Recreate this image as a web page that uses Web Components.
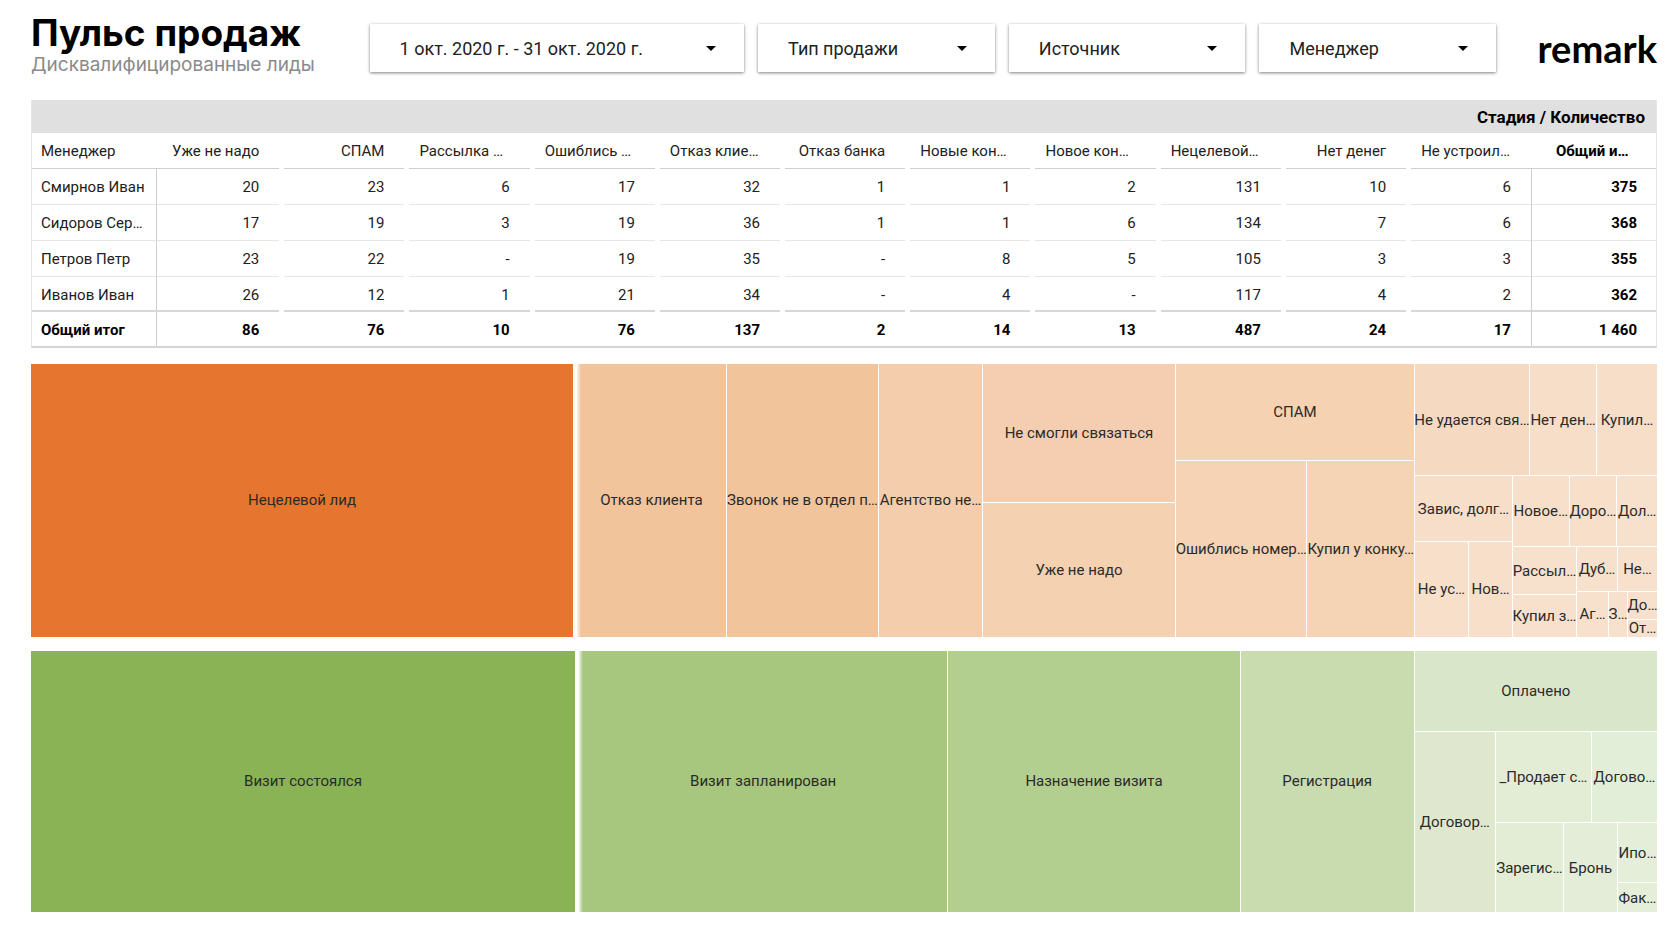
<!DOCTYPE html>
<html lang="ru">
<head>
<meta charset="utf-8">
<meta name="viewport" content="width=device-width, initial-scale=1">
<title>Пульс продаж</title>
<style>
  body { margin: 0; background: #fff; color: #212121; font-family: Roboto, "Noto Sans", sans-serif; }
</style>
</head>
<body>
<sales-dashboard></sales-dashboard>

<script>
class BaseElement extends HTMLElement {
  render(html) {
    const template = document.createElement('template');
    template.innerHTML = html;
    this.attachShadow({ mode: 'open' }).append(template.content.cloneNode(true));
  }
}

/* Page title with a caption below it */
customElements.define('report-title', class extends BaseElement {
  connectedCallback() {
    this.render(`
      <style>
        :host { display: block; font-family: Inter, "Noto Sans", sans-serif; white-space: nowrap; }
        h1 { margin: 0; font-size: 37px; line-height: 40px; font-weight: 700; color: #000; }
        p { margin: 0; font-size: 19px; line-height: 24px; color: #8a8a8a; }
      </style>
      <h1><slot></slot></h1>
      <p><slot name="caption"></slot></p>`);
  }
});

/* Date range button */
customElements.define('date-filter', class extends BaseElement {
  connectedCallback() {
    this.render(`
      <style>
        :host { display: block; }
        button { display: flex; align-items: center; justify-content: space-between; box-sizing: border-box;
          width: 100%; height: 48px; padding: 0 28px 0 30px; border: 0; background: #fff; color: #212121;
          font: 18px Roboto, "Noto Sans", sans-serif; box-shadow: 0 1px 3px rgba(0,0,0,.5); }
        svg { width: 10px; height: 5px; fill: #000; }
      </style>
      <button type="button" aria-haspopup="dialog"><slot></slot><svg viewBox="0 0 10 5" aria-hidden="true"><path d="M0 0h10L5 5z"/></svg></button>`);
  }
});

/* Drop-down filter */
customElements.define('select-filter', class extends BaseElement {
  connectedCallback() {
    const label = this.getAttribute('label');
    this.render(`
      <style>
        :host { display: block; }
        .box { display: grid; align-items: center; background: #fff; box-shadow: 0 1px 3px rgba(0,0,0,.5); }
        select, svg { grid-area: 1 / 1; }
        select { appearance: none; width: 100%; height: 48px; padding: 0 48px 0 30px; border: 0; border-radius: 0;
          background: transparent; color: #212121; font: 18px Roboto, "Noto Sans", sans-serif; }
        svg { justify-self: end; margin-right: 28px; width: 10px; height: 5px; fill: #000; pointer-events: none; }
      </style>
      <div class="box">
        <select aria-label="${label}"><option>${label}</option></select>
        <svg viewBox="0 0 10 5" aria-hidden="true"><path d="M0 0h10L5 5z"/></svg>
      </div>`);
  }
});

customElements.define('brand-logo', class extends BaseElement {
  connectedCallback() {
    this.render(`
      <style>
        :host { display: block; color: #000; font: 700 38px/48px Lato, "Noto Sans", sans-serif; }
      </style>
      <slot></slot>`);
  }
});

/* Pivot table: managers by stage */
const STAGES = ['Уже не надо', 'СПАМ', 'Рассылка …', 'Ошиблись …', 'Отказ клие…', 'Отказ банка', 'Новые кон…',
  'Новое кон…', 'Нецелевой…', 'Нет денег', 'Не устроил…', 'Общий и…'];
const MANAGERS = [
  ['Смирнов Иван', '20', '23', '6', '17', '32', '1', '1', '2', '131', '10', '6', '375'],
  ['Сидоров Сер…', '17', '19', '3', '19', '36', '1', '1', '6', '134', '7', '6', '368'],
  ['Петров Петр', '23', '22', '-', '19', '35', '-', '8', '5', '105', '3', '3', '355'],
  ['Иванов Иван', '26', '12', '1', '21', '34', '-', '4', '-', '117', '4', '2', '362'],
];
const TOTALS = ['Общий итог', '86', '76', '10', '76', '137', '2', '14', '13', '487', '24', '17', '1 460'];

customElements.define('pivot-table', class extends BaseElement {
  connectedCallback() {
    const row = cells => `<tr><th scope="row">${cells[0]}</th>${cells.slice(1).map(c => `<td><span>${c}</span></td>`).join('')}</tr>`;
    this.render(`
      <style>
        :host { display: block; }
        table { width: 100%; table-layout: fixed; border-collapse: separate; border-spacing: 0; box-sizing: border-box;
          border: 1px solid #e6e6e6; border-top: 0; border-bottom: 2px solid #d4d4d4;
          font-size: 15px; line-height: 20px; }
        .name, .total { width: 7.7%; }
        .last { width: 7.5%; }
        th, td { padding: 0; font-weight: 400; text-align: right; white-space: nowrap; }
        th:first-child { text-align: left; padding-left: 9px; }
        .band th:first-child { height: 33px; padding-right: 11px; background: #e0e0e0; color: #000;
          font-size: 17px; font-weight: 700; text-align: right; }
        span { display: block; box-sizing: border-box; padding: 0 20px 0 10px; margin: 0 3px 0 2px; border-bottom: 1px solid #e6e6e6; }
        tbody th, tbody span { line-height: 33px; padding-top: 2px; border-bottom: 1px solid #e6e6e6; }
        .stages th { height: 35px; }
        .stages th:first-child { border-bottom: 1px solid #cfcfcf; }
        .stages span { line-height: 34px; border-color: #cfcfcf; }
        .stages .cut { text-align: left; }
        tbody th, tfoot th { border-right: 1px solid #cfcfcf; }
        td:nth-child(2) span, .stages th:nth-child(2) span { margin-left: 0; }
        td:nth-child(12) span, .stages th:nth-child(12) span { margin-right: 0; }
        td:last-child, .stages th:last-child { font-weight: 700; color: #000; }
        td:last-child { border-left: 1px solid #cfcfcf; }
        td:last-child span, .stages th:last-child span { margin: 0; padding-left: 25px; padding-right: 19px; }
        tbody tr:last-child th, tbody tr:last-child span { border-bottom: 2px solid #d8d8d8; line-height: 29px; padding-top: 4px; }
        tfoot th, tfoot td { font-weight: 700; color: #000; line-height: 32px; }
        tfoot th, tfoot span { padding-top: 2px; border-bottom: 0; }
      </style>
      <table>
        <colgroup><col class="name"><col span="10"><col class="last"><col class="total"></colgroup>
        <thead>
          <tr class="band"><th colspan="13">Стадия / Количество</th></tr>
          <tr class="stages"><th scope="col">Менеджер</th>${STAGES.map(s => `<th scope="col"><span class="${s.endsWith('…') ? 'cut' : ''}">${s}</span></th>`).join('')}</tr>
        </thead>
        <tbody>${MANAGERS.map(row).join('')}</tbody>
        <tfoot>${row(TOTALS)}</tfoot>
      </table>`);
  }
});

/* Treemap: nested rows and columns whose shares come from the "share" attribute */
customElements.define('tree-group', class extends BaseElement {
  connectedCallback() {
    this.style.flexGrow = this.getAttribute('share') || 1;
    this.render(`
      <style>
        :host { display: flex; flex-basis: 0; gap: 1px; min-width: 0; min-height: 0; }
        :host([column]) { flex-direction: column; }
        :host([lead]) { gap: 4px; }
      </style>
      <slot></slot>`);
  }
});

customElements.define('tree-tile', class extends BaseElement {
  connectedCallback() {
    this.style.flexGrow = this.getAttribute('share');
    this.style.backgroundColor = this.getAttribute('color');
    this.render(`
      <style>
        :host { display: flex; flex-basis: 0; align-items: center; justify-content: center; min-width: 0; min-height: 0;
          color: #2b2b2b; font-size: 15px; line-height: 16px; white-space: nowrap; }
        :host([fade]) { background-image: linear-gradient(90deg, rgba(255,255,255,.8), rgba(255,255,255,0) 4px); }
      </style>
      <slot></slot>`);
  }
});

customElements.define('sales-dashboard', class extends BaseElement {
  connectedCallback() {
    this.render(`
      <style>
        :host { display: flex; flex-direction: column; box-sizing: border-box; min-height: 100vh; padding: 13px 23px 23px 31px; }
        header { display: grid; grid-template-columns: 325fr 375fr 237fr 237fr 237fr 147fr; column-gap: 14px; align-items: start; }
        date-filter, select-filter { margin-top: 11px; }
        brand-logo { margin-top: 11px; justify-self: end; }
        pivot-table { margin-top: 23px; }
        .leads, .visits { flex: 274 0 0; margin-top: 14px; display: flex; min-height: 240px; }
        .leads { margin-top: 16px; }
        .visits { flex-grow: 262; }
      </style>
      <header>
        <report-title>Пульс продаж<span slot="caption">Дисквалифицированные лиды</span></report-title>
        <date-filter>1 окт. 2020 г. - 31 окт. 2020 г.</date-filter>
        <select-filter label="Тип продажи"></select-filter>
        <select-filter label="Источник"></select-filter>
        <select-filter label="Менеджер"></select-filter>
        <brand-logo>remark</brand-logo>
      </header>
      <pivot-table></pivot-table>
      <section class="leads" aria-label="Причины дисквалификации">
        <tree-group lead>
          <tree-tile share="542" color="#e6752f">Нецелевой лид</tree-tile>
          <tree-group share="1080">
            <tree-tile share="149" color="#f1c49b" fade>Отказ клиента</tree-tile>
            <tree-tile share="151" color="#f1c49b">Звонок не в отдел п…</tree-tile>
            <tree-tile share="103" color="#f4ceac">Агентство не…</tree-tile>
            <tree-group column share="192">
              <tree-tile share="139" color="#f5cdb0">Не смогли связаться</tree-tile>
              <tree-tile share="134" color="#f4d1b0">Уже не надо</tree-tile>
            </tree-group>
            <tree-group column share="238">
              <tree-tile share="96" color="#f5d2b2">СПАМ</tree-tile>
              <tree-group share="177">
                <tree-tile share="131" color="#f5d3b4">Ошиблись номер…</tree-tile>
                <tree-tile share="107" color="#f5d4b5">Купил у конку…</tree-tile>
              </tree-group>
            </tree-group>
            <tree-group column share="242">
              <tree-group share="111">
                <tree-tile share="114" color="#f6d9c1">Не удается свя…</tree-tile>
                <tree-tile share="66" color="#f7dec8">Нет ден…</tree-tile>
                <tree-tile share="60" color="#f7dec8">Купил…</tree-tile>
              </tree-group>
              <tree-group share="161">
                <tree-group column share="97">
                  <tree-tile share="65" color="#f7dec8">Завис, долг…</tree-tile>
                  <tree-group share="95">
                    <tree-tile share="53" color="#f7dfca">Не ус…</tree-tile>
                    <tree-tile share="43" color="#f7dfca">Нов…</tree-tile>
                  </tree-group>
                </tree-group>
                <tree-group column share="144">
                  <tree-group share="70">
                    <tree-tile share="56" color="#f7dfca">Новое…</tree-tile>
                    <tree-tile share="47" color="#f7dfca">Доро…</tree-tile>
                    <tree-tile share="40" color="#f7e0cc">Дол…</tree-tile>
                  </tree-group>
                  <tree-group share="90">
                    <tree-group column share="63">
                      <tree-tile share="48" color="#f7e0cc">Рассыл…</tree-tile>
                      <tree-tile share="42" color="#f7e0cc">Купил з…</tree-tile>
                    </tree-group>
                    <tree-group column share="80">
                      <tree-group share="44">
                        <tree-tile share="40" color="#f7e0cc">Дуб…</tree-tile>
                        <tree-tile share="39" color="#f7e1cd">Не…</tree-tile>
                      </tree-group>
                      <tree-group share="45">
                        <tree-tile share="31" color="#f7e1cd">Аг…</tree-tile>
                        <tree-tile share="18" color="#f7e1cd">З…</tree-tile>
                        <tree-group column share="29">
                          <tree-tile share="27" color="#f7e1cd">До…</tree-tile>
                          <tree-tile share="17" color="#f7e1cd">От…</tree-tile>
                        </tree-group>
                      </tree-group>
                    </tree-group>
                  </tree-group>
                </tree-group>
              </tree-group>
            </tree-group>
          </tree-group>
        </tree-group>
      </section>
      <section class="visits" aria-label="Стадии визитов">
        <tree-group lead>
          <tree-tile share="544" color="#8ab355">Визит состоялся</tree-tile>
          <tree-group share="1078">
            <tree-tile share="368" color="#a6c77d" fade>Визит запланирован</tree-tile>
            <tree-tile share="291" color="#b3cf8f">Назначение визита</tree-tile>
            <tree-tile share="173" color="#c8dcaf">Регистрация</tree-tile>
            <tree-group column share="242">
              <tree-tile share="80" color="#dae6c9">Оплачено</tree-tile>
              <tree-group share="181">
                <tree-tile share="80" color="#dfe8cf">Договор…</tree-tile>
                <tree-group column share="161">
                  <tree-group share="91">
                    <tree-tile share="95" color="#e3ecd5">_Продает с…</tree-tile>
                    <tree-tile share="65" color="#e2eed7">Догово…</tree-tile>
                  </tree-group>
                  <tree-group share="89">
                    <tree-tile share="67" color="#e3edd6">Зарегис…</tree-tile>
                    <tree-tile share="53" color="#e4edd7">Бронь</tree-tile>
                    <tree-group column share="39">
                      <tree-tile share="59" color="#e4eed8">Ипо…</tree-tile>
                      <tree-tile share="29" color="#e4eed8">Фак…</tree-tile>
                    </tree-group>
                  </tree-group>
                </tree-group>
              </tree-group>
            </tree-group>
          </tree-group>
        </tree-group>
      </section>`);
  }
});
</script>
</body>
</html>
